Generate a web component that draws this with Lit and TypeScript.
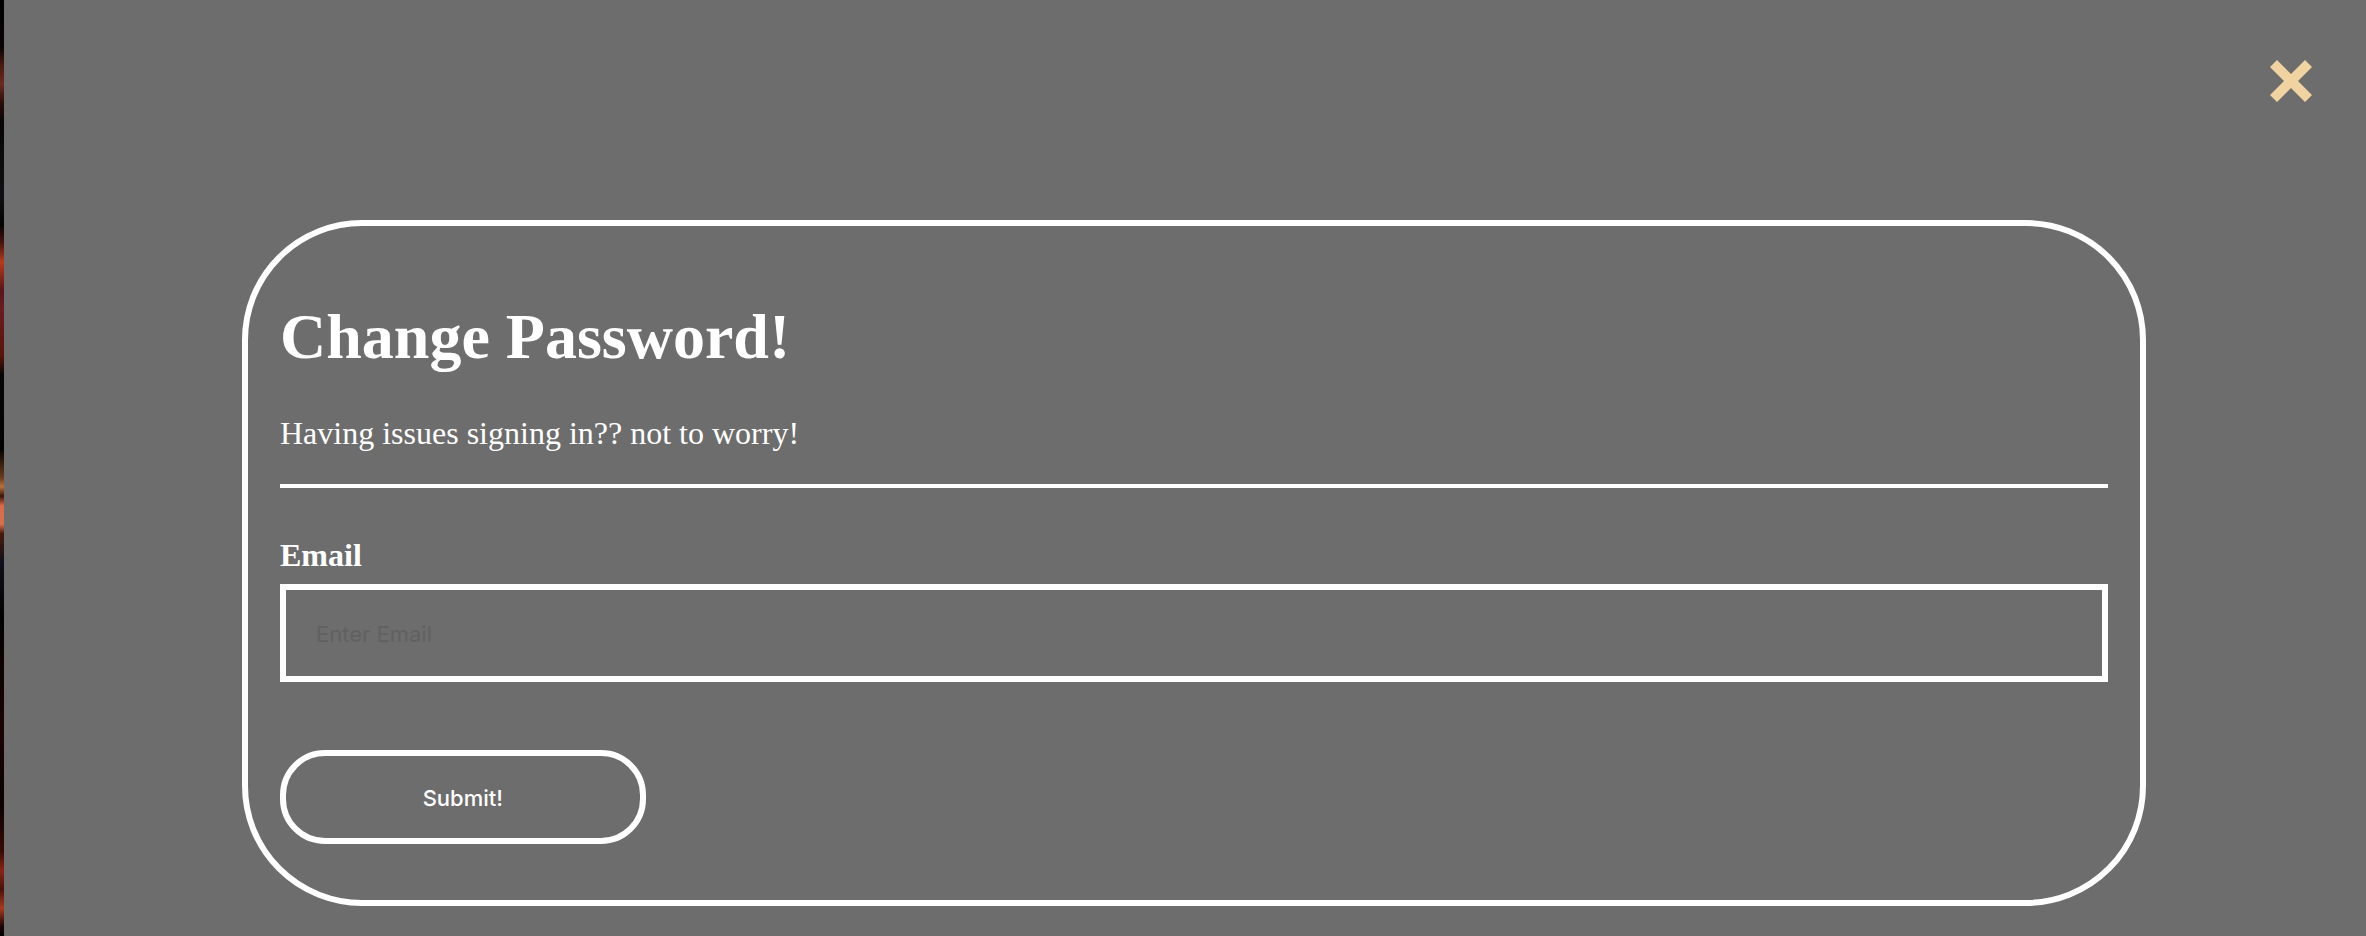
import { LitElement, html, css } from "lit";
import { customElement } from "lit/decorators.js";

@customElement("app-root")
export class AppRoot extends LitElement {
  static styles = css`
    :host {
      display: block;
      overflow: hidden;
      color: #fff;
      font-family: "Liberation Serif", "Times New Roman", serif;
      font-size: 32px;
      line-height: 36px;
      /* the sliver of the fiery backdrop that the overlay leaves open */
      background: linear-gradient(
        #000 0%, #0a0303 5%, #4a1a12 7%, #6a2a20 9%, #2a0c0a 11%, #080404 13%,
        #101014 21%, #050202 24%, #4a1410 26%, #b83a1c 28%, #5a1418 31%,
        #6a1c20 33%, #5a1408 38%, #080604 40%, #020202 48%, #6a3a1c 51%,
        #b8713c 52%, #3a1408 53%, #d86a48 54%, #d8704c 56%, #4a1a0c 57%,
        #10101a 60%, #020202 66%, #1a0402 78%, #0a0202 86%, #3a0a04 91%,
        #8a2414 93%, #4a1008 95%, #a83a20 97%, #1a0402 99%, #000 100%
      );
    }
    * {
      box-sizing: border-box;
    }
    .overlay {
      min-height: 100vh;
      margin: 0 -18px 0 4px;
      padding: 48px 0 30px;
      background: #6d6d6d;
    }
    .bar {
      display: flex;
      justify-content: flex-end;
      padding-right: 60px;
    }
    .close {
      display: flex;
      padding: 12px;
      border: 0;
      background: none;
      color: #f1d3a1;
      cursor: pointer;
    }
    .close svg {
      display: block;
      width: 42px;
      height: 42px;
    }
    .card {
      width: 80%;
      margin: 106px auto 0;
      padding: 74px 32px 56px;
      border: 6px solid #fff;
      border-radius: 120px;
    }
    h1 {
      margin: 0;
      font-size: 64px;
      line-height: 74px;
    }
    p {
      margin: 41px 0 0;
    }
    hr {
      height: 4px;
      margin: 33px 0 49px;
      border: 0;
      background: #fff;
    }
    label {
      display: block;
      font-weight: bold;
    }
    input,
    .submit {
      display: block;
      border: 6px solid #fff;
      background: transparent;
      color: #fff;
      font: 22px/28px Inter, sans-serif;
    }
    input {
      width: 100%;
      height: 98px;
      margin: 11px 0 68px;
      padding: 2px 30px 0;
      border-radius: 0;
    }
    input::placeholder {
      color: #616161;
      opacity: 1;
    }
    .submit {
      width: 20%;
      height: 94px;
      padding: 2px 0 0;
      border-radius: 45px;
      font-weight: 500;
      cursor: pointer;
    }
  `;

  render() {
    return html`
      <main class="overlay">
        <div class="bar">
          <button class="close" type="button" aria-label="Close">
            <svg viewBox="0 0 42 42" fill="currentColor" aria-hidden="true">
              <path d="M7 0 21 14 35 0 42 7 28 21 42 35 35 42 21 28 7 42 0 35 14 21 0 7Z" />
            </svg>
          </button>
        </div>
        <form class="card" @submit=${(e: Event) => e.preventDefault()}>
          <h1>Change Password!</h1>
          <p>Having issues signing in?? not to worry!</p>
          <hr />
          <label for="email">Email</label>
          <input id="email" type="text" name="email" placeholder="Enter Email" />
          <button class="submit" type="submit">Submit!</button>
        </form>
      </main>
    `;
  }
}
